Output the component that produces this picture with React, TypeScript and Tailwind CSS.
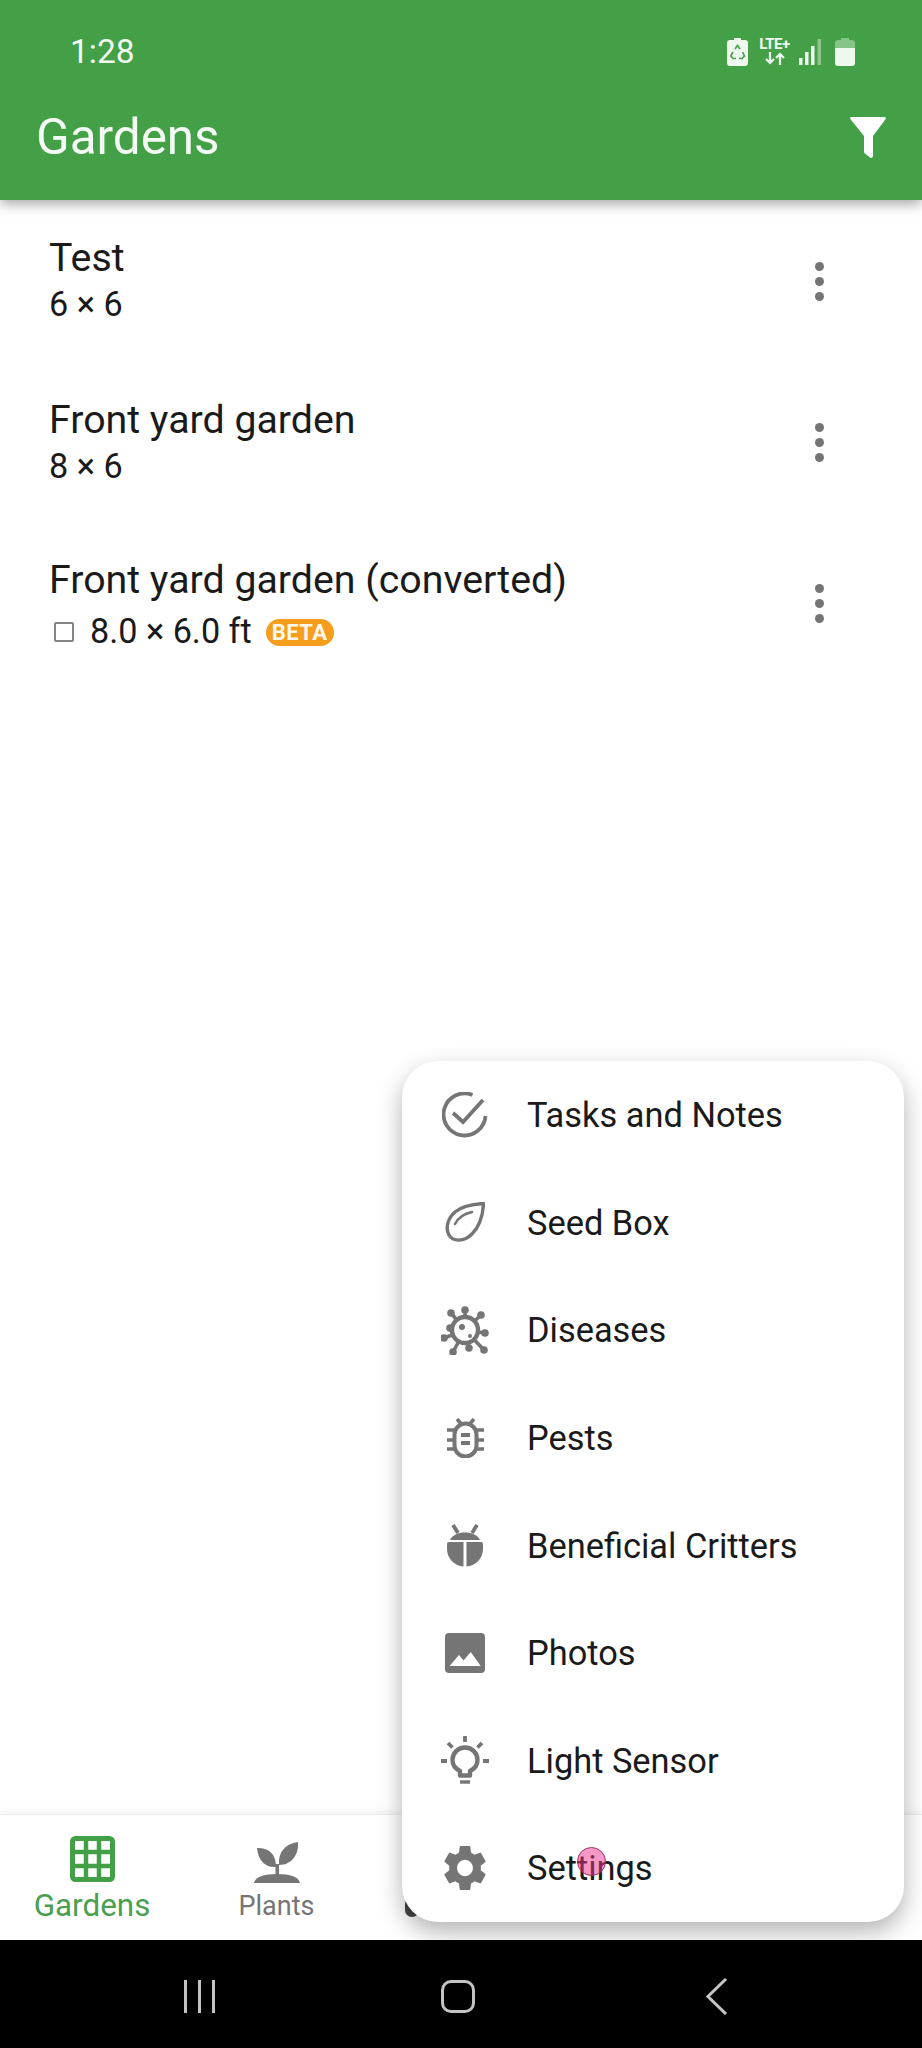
import React from "react";

const G = "#757575";

function Check() {
  return (
    <svg width="46" height="46" viewBox="0 0 46 46" fill="none" stroke={G} strokeWidth="3.8">
      <path d="M30.5 3A21 21 0 1 0 43.5 24" />
      <path d="M11 21l10 9L41 8" />
    </svg>
  );
}
function Leaf() {
  return (
    <svg width="40" height="40" viewBox="0 0 40 40" fill="none" stroke={G} strokeWidth="3.4" strokeLinejoin="round">
      <path d="M38.5 1.5C30 2 18 3 10 10C3 16 0 26 4 33C8 40 19 40 27 32C35 24 38 12 38.5 1.5Z" />
      <path d="M10 22C13 16 18 12 27 10" strokeLinecap="round" strokeWidth="2.6" />
    </svg>
  );
}
function Virus() {
  const arms: [number, number][] = [
    [24, 4], [40, 9], [44, 27], [43, 44], [28, 42], [12, 46], [3, 32], [9, 22], [10, 7],
  ];
  return (
    <svg width="48" height="49" viewBox="0 0 48 49" fill="none">
      {arms.map((a, i) => (
        <g key={i}>
          <line x1="24" y1="24" x2={a[0]} y2={a[1]} stroke={G} strokeWidth="3.6" />
          <circle cx={a[0]} cy={a[1]} r="3.8" fill={G} />
        </g>
      ))}
      <circle cx="24" cy="24" r="13" fill="white" stroke={G} strokeWidth="4.4" />
      <circle cx="21" cy="21" r="3" fill={G} />
      <circle cx="29" cy="30" r="2" fill={G} />
    </svg>
  );
}
function Bug() {
  return (
    <svg width="37" height="40" viewBox="0 0 37 40" fill="none" stroke={G} strokeWidth="3.6">
      <path d="M10 1l6 7M27 1l-6 7" />
      <path d="M0 12h37M0 22h37M0 31h37" strokeWidth="3.4" />
      <rect x="7.5" y="5.5" width="22" height="33" rx="11" fill="white" strokeWidth="4" />
      <path d="M14 17h9M14 25h9" strokeWidth="3.8" />
    </svg>
  );
}
function Beetle() {
  return (
    <svg width="36" height="43" viewBox="0 0 36 43" fill={G}>
      <path d="M6 1l5 8M30 1l-5 8" stroke={G} strokeWidth="3.8" fill="none" />
      <path d="M3 16C7 6 29 6 33 16Z" />
      <path d="M0 20Q0 18 2 18H16.5V42.5C7 42 0 34 0 25Z" />
      <path d="M36 20Q36 18 34 18H19.5V42.5C29 42 36 34 36 25Z" />
    </svg>
  );
}
function Photo() {
  return (
    <svg width="40" height="40" viewBox="0 0 40 40">
      <rect width="40" height="40" rx="4" fill={G} />
      <path d="M4.5 33L14 22l4.5 5.5L25.7 19l10 14Z" fill="white" />
    </svg>
  );
}
function Bulb() {
  return (
    <svg width="50" height="50" viewBox="0 0 50 50" fill="none" stroke={G} strokeWidth="4.4">
      <path d="M20 39.5v-4.5c-4-2-7.5-5.5-7.5-11a12.5 12.5 0 0 1 25 0c0 5.500-3.500 9-7.500 11v4.500Z" strokeLinejoin="round" />
      <path d="M20 46h10" strokeWidth="3.4" />
      <path d="M25 0v6M8 7l4.500 4.500M42 7l-4.500 4.500M1 25h6M43 25h6" strokeWidth="3.8" />
    </svg>
  );
}
function Gear() {
  return (
    <svg width="44" height="46" viewBox="2 2 20 20" fill={G} preserveAspectRatio="none">
      <path d="M19.14 12.94c.04-.3.06-.61.06-.94 0-.32-.02-.64-.07-.94l2.03-1.58a.49.49 0 0 0 .12-.61l-1.92-3.32a.488.488 0 0 0-.59-.22l-2.39.96c-.5-.38-1.03-.7-1.62-.94l-.36-2.54a.484.484 0 0 0-.48-.41h-3.84c-.24 0-.43.17-.47.41l-.36 2.54c-.59.24-1.13.57-1.62.94l-2.39-.96c-.22-.08-.47 0-.59.22L2.74 8.87c-.12.21-.08.47.12.61l2.03 1.58c-.05.3-.09.63-.09.94s.02.64.07.94l-2.03 1.58a.49.49 0 0 0-.12.61l1.92 3.32c.12.22.37.29.59.22l2.39-.96c.5.38 1.03.7 1.62.94l.36 2.54c.05.24.24.41.48.41h3.84c.24 0 .44-.17.47-.41l.36-2.54c.59-.24 1.13-.56 1.62-.94l2.39.96c.22.08.47 0 .59-.22l1.92-3.32c.12-.22.07-.47-.12-.61l-2.01-1.58zM12 15.6c-1.98 0-3.6-1.62-3.6-3.6s1.62-3.6 3.6-3.6 3.6 1.62 3.6 3.6-1.62 3.6-3.6 3.6z" />
    </svg>
  );
}

const items: [string, React.ReactNode][] = [
  ["Tasks and Notes", <Check />],
  ["Seed Box", <Leaf />],
  ["Diseases", <Virus />],
  ["Pests", <Bug />],
  ["Beneficial Critters", <Beetle />],
  ["Photos", <Photo />],
  ["Light Sensor", <Bulb />],
  ["Settings", <Gear />],
];

function Dots() {
  return (
    <div className="flex flex-col gap-[6px] w-[10px] items-center mr-[98px] mt-[2px]">
      <div className="w-[9px] h-[9px] rounded-full bg-[#757575]" />
      <div className="w-[9px] h-[9px] rounded-full bg-[#757575]" />
      <div className="w-[9px] h-[9px] rounded-full bg-[#757575]" />
    </div>
  );
}

function Row({ title, offset, children }: { title: string; offset?: string; children: React.ReactNode }) {
  return (
    <div className="h-[161px] flex items-center justify-between pl-[49px]">
      <div className={`flex flex-col ${offset ?? ""}`}>
        <div className="text-[39.3px] leading-[50px] text-[#1a1a1a]">{title}</div>
        {children}
      </div>
      <Dots />
    </div>
  );
}

export default function App() {
  return (
    <div className="relative w-[922px] h-[2048px] overflow-hidden bg-white flex flex-col font-['Roboto',sans-serif]">
      <div className="h-[200px] bg-[#43a047] shadow-[0_4px_12px_rgba(0,0,0,0.35)] z-10 flex flex-col text-[#f1f8f1] shrink-0">
        <div className="h-[90px] flex items-center justify-between pl-[70px] pr-[67px] pt-[14px]">
          <span className="text-[33.5px]">1:28</span>
          <div className="flex items-center gap-[10px]">
            <svg width="21" height="28" viewBox="0 0 21 28">
              <path d="M7 0h7v2h4a3 3 0 0 1 3 3v20a3 3 0 0 1-3 3H3a3 3 0 0 1-3-3V5a3 3 0 0 1 3-3h4Z" fill="#eef8ee" />
              <path d="M8 11l2.500-3.500L13 11M15.500 14l2 4-2.500 2.500H12M9 20.500H6L3.800 18 6 14" fill="none" stroke="#43a047" strokeWidth="1.6" />
            </svg>
            <div className="flex flex-col items-center w-[33px] -mt-[2px]">
              <span className="text-[15px] leading-[15px] font-bold tracking-[-0.5px]">LTE+</span>
              <svg width="20" height="13" viewBox="0 0 20 13" fill="none" stroke="#eef8ee" strokeWidth="2.2">
                <path d="M5 0v11M1 7l4 4 4-4M15 13V2M11 6l4-4 4 4" />
              </svg>
            </div>
            <svg width="24" height="26" viewBox="0 0 24 26" className="ml-[-2px]">
              <rect x="0" y="19" width="3.5" height="7" fill="#eef8ee" />
              <rect x="6" y="13" width="3.5" height="13" fill="#eef8ee" />
              <rect x="12" y="7" width="3.5" height="19" fill="#eef8ee" />
              <rect x="18.5" y="0" width="3.5" height="26" fill="#8cc68e" />
            </svg>
            <svg width="20" height="28" viewBox="0 0 20 28" className="ml-[2px]">
              <path d="M6 0h8v2h3a3 3 0 0 1 3 3v5H0V5a3 3 0 0 1 3-3h3Z" fill="#86c488" />
              <path d="M0 10h20v15a3 3 0 0 1-3 3H3a3 3 0 0 1-3-3Z" fill="#eef8ee" />
            </svg>
          </div>
        </div>
        <div className="flex-1 flex items-start justify-between pl-[36px] pr-[36px] pt-[2px]">
          <span className="text-[49.4px] leading-[90px] text-[#f4faf4]">Gardens</span>
          <svg width="36" height="41" viewBox="0 0 36 41" className="mt-[25px]">
            <path d="M1.500 0h33a1.300 1.300 0 0 1 1 2.200L23 19v20a2 2 0 0 1-3 1.600l-5-4a2.500 2.500 0 0 1-1-2V19L.5 2.200A1.300 1.300 0 0 1 1.500 0Z" fill="#ffffff" />
          </svg>
        </div>
      </div>

      <div className="flex-1">
        <Row title="Test" offset="-mt-[2px]">
          <div className="text-[34.2px] leading-[43px] text-[#1a1a1a]">6 × 6</div>
        </Row>
        <Row title="Front yard garden">
          <div className="text-[34.2px] leading-[43px] text-[#1a1a1a]">8 × 6</div>
        </Row>
        <Row title="Front yard garden (converted)" offset="mt-[9px]">
          <div className="flex items-center h-[54px] text-[34.2px] text-[#1a1a1a]">
            <div className="w-[20px] h-[20px] ml-[5px] border-2 border-[#858585] rounded-[2px]" />
            <span className="ml-[16px]">8.0 × 6.0 ft</span>
            <span className="ml-[14px] h-[27px] w-[68px] rounded-full bg-[#f59d1c] text-[#fff8ea] text-[22px] font-bold flex items-center justify-center tracking-[0.5px]">BETA</span>
          </div>
        </Row>
      </div>

      <div className="h-[126px] bg-white shrink-0 border-t border-[#eeeeee] flex shadow-[0_-3px_8px_rgba(0,0,0,0.05)]">
        <div className="w-[184px] flex flex-col items-center pt-[21px]">
          <svg width="45" height="46" viewBox="0 0 45 46">
            <rect x="2.500" y="2.500" width="40" height="41" rx="3" fill="#ffffff" stroke="#43a047" strokeWidth="5" />
            <path d="M16 2v42M29 2v42M2 16h41M2 30h41" stroke="#43a047" strokeWidth="4.500" />
          </svg>
          <span className="text-[31.4px] leading-[36px] mt-[6px] text-[#4a9f50]">Gardens</span>
        </div>
        <div className="w-[185px] flex flex-col items-center pt-[27px] text-[#757575]">
          <svg width="46" height="41" viewBox="0 0 46 41" fill="#757575">
            <path d="M3 6C14 6 22 11 22 25C11 26 4 18 3 6Z" />
            <path d="M44 0C45 12 38 23 25 23C24 10 31 2 44 0Z" />
            <path d="M21.500 22h3.500v12h-3.500Z" />
            <path d="M0 41c1-6 10-9 23-9s22 3 23 9Z" />
          </svg>
          <span className="text-[27px] leading-[34px] mt-[6px]">Plants</span>
        </div>
      </div>

      <div className="h-[108px] bg-black shrink-0 flex items-center">
        <div className="flex items-center ml-[184px] mt-[4px] gap-[11px]">
          <div className="w-[3px] h-[33px] bg-[#c4c4c4]" />
          <div className="w-[3px] h-[33px] bg-[#c4c4c4]" />
          <div className="w-[3px] h-[33px] bg-[#c4c4c4]" />
        </div>
        <div className="ml-[226px] mt-[4px] w-[34px] h-[33px] rounded-[10px] border-[3px] border-[#c4c4c4]" />
        <svg width="22" height="37" viewBox="0 0 22 37" fill="none" stroke="#c4c4c4" strokeWidth="3" className="ml-[231px] mt-[4px]">
          <path d="M20 1L2 18.500 20 36" />
        </svg>
      </div>

      {/* tab label peeking out from behind the menu corner */}
      <div className="absolute left-[405px] top-[1897px] w-[14px] h-[20px] rounded-full bg-[#444444] z-10" />

      {/* overflow menu over the page */}
      <div className="absolute left-[402px] top-[1061px] w-[502px] h-[861px] bg-white rounded-[36px] z-20 shadow-[0_10px_24px_rgba(0,0,0,0.3)] flex flex-col">
        {items.map(([label, icon]) => (
          <div key={label} className="flex-1 flex items-center">
            <div className="w-[126px] flex justify-center shrink-0">{icon}</div>
            <span className="text-[34.4px] text-[#1a1a1a] pt-[2px] -ml-[1px]">{label}</span>
          </div>
        ))}
      </div>
      {/* touch indicator */}
      <div className="absolute left-[577px] top-[1847px] w-[29px] h-[29px] rounded-full bg-[#f0349080] border border-[#a03070] z-30" />
    </div>
  );
}
